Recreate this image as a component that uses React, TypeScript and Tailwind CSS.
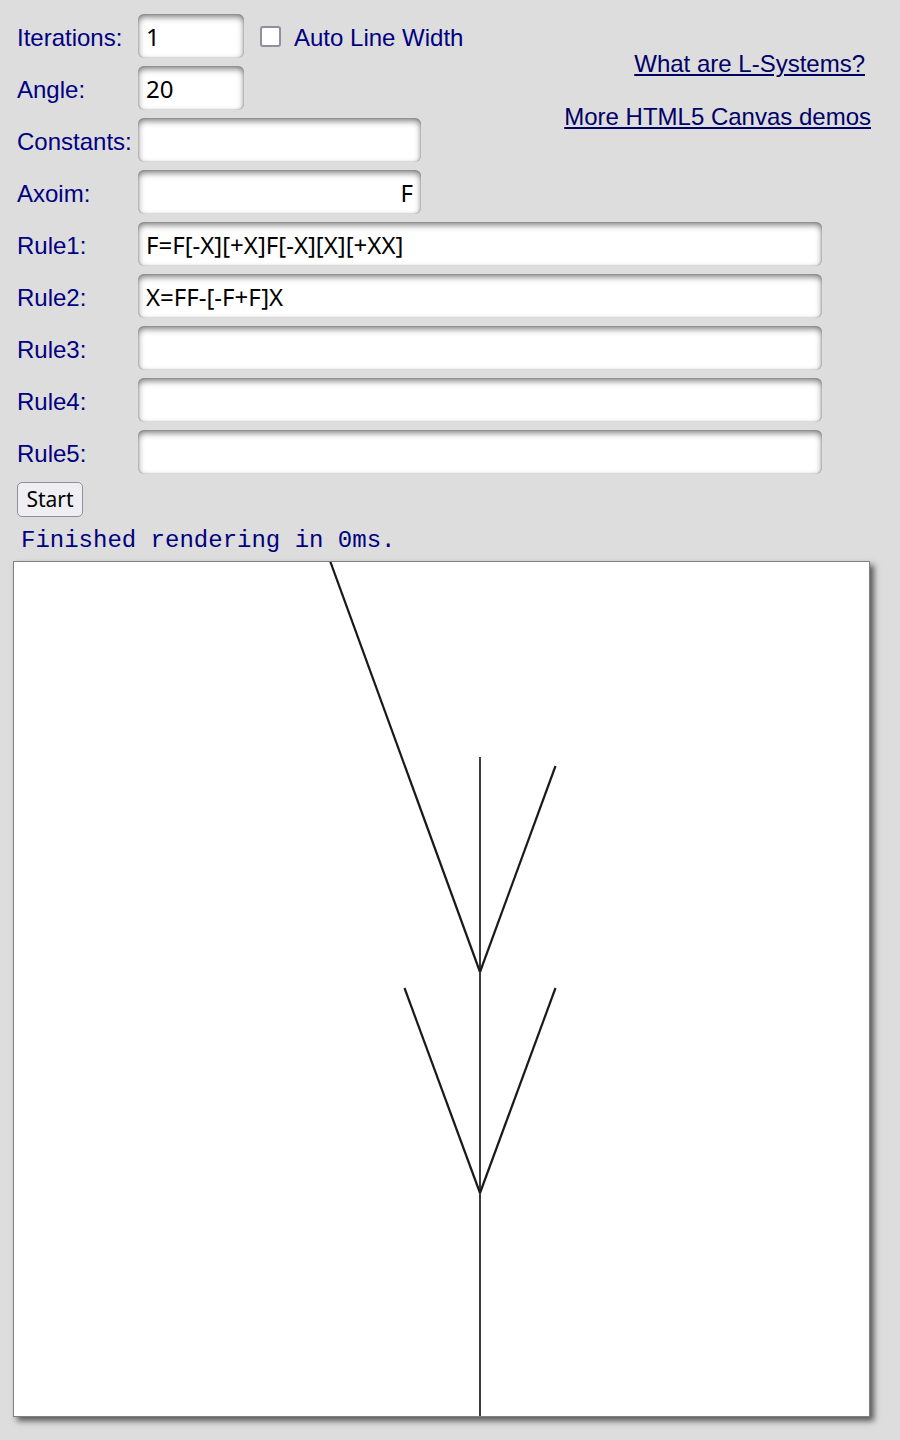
import React from 'react';

const label = 'w-[138px] shrink-0 pl-[17px] pt-[3px] text-[24px] leading-none text-[#000080]';
const field =
  'h-[44px] rounded-[6px] bg-white px-[8px] text-[24px] text-black outline-none shadow-[inset_0_3px_6px_rgba(0,0,0,0.5),inset_0_0_2px_rgba(0,0,0,0.3)]';

function Row({ name, value = '', width, right }: { name: string; value?: string; width: string; right?: boolean }) {
  return (
    <div className="flex items-center h-[44px]">
      <span className={label}>{name}</span>
      <input readOnly value={value} className={`${field} ${width} ${right ? 'text-right' : ''}`} style={{ fontFamily: '"Noto Sans", sans-serif' }} />
    </div>
  );
}

// tree drawn from the L-system, 1 iteration
function Tree() {
  const segs: [number, number, number, number][] = [
    [466, 856, 466, 631],
    [466, 631, 390.5, 426],
    [466, 631, 541.5, 426],
    [466, 631, 466, 410],
    [466, 410, 541.5, 204],
    [466, 410, 466, 195],
    [466, 410, 390.5, 203],
    [390.5, 203, 315, -4],
  ];
  return (
    <svg width="855" height="854" viewBox="0 0 855 854" className="block">
      {segs.map(([x1, y1, x2, y2], i) => (
        <line key={i} x1={x1} y1={y1} x2={x2} y2={y2} stroke="#1a1a1a" strokeWidth={x1 === x2 ? 1.7 : 2.2} />
      ))}
    </svg>
  );
}

export default function App() {
  return (
    <div className="min-h-[1440px] w-[900px] bg-[#dddddd] pt-[14px]" style={{ fontFamily: '"Liberation Sans", Arial, sans-serif' }}>
      <div className="flex">
        <div className="flex flex-col gap-[8px]">
          <div className="flex items-center h-[44px]">
            <span className={label}>Iterations:</span>
            <input readOnly value="1" className={`${field} w-[106px]`} style={{ fontFamily: '"Noto Sans", sans-serif' }} />
            <span className="ml-[16px] w-[21px] h-[21px] rounded-[3px] border-2 border-[#8f8f9d] bg-white" />
            <span className="ml-[13px] pt-[3px] text-[24px] leading-none text-[#000080]">Auto Line Width</span>
          </div>
          <Row name="Angle:" value="20" width="w-[106px]" />
          <Row name="Constants:" width="w-[283px]" />
          <Row name="Axoim:" value="F" width="w-[283px]" right />
        </div>
        <div className="flex-1 flex flex-col items-end pr-[29px] pt-[38px] gap-[29px] text-[24px] leading-none text-[#000066]">
          <a href="#" className="underline mr-[6px]">What are L-Systems?</a>
          <a href="#" className="underline">More HTML5 Canvas demos</a>
        </div>
      </div>

      <div className="mt-[8px] flex flex-col gap-[8px]">
        <Row name="Rule1:" value="F=F[-X][+X]F[-X][X][+XX]" width="w-[684px]" />
        <Row name="Rule2:" value="X=FF-[-F+F]X" width="w-[684px]" />
        <Row name="Rule3:" width="w-[684px]" />
        <Row name="Rule4:" width="w-[684px]" />
        <Row name="Rule5:" width="w-[684px]" />
      </div>

      <button
        className="ml-[17px] mt-[8px] w-[66px] h-[35px] rounded-[5px] border border-[#8f8f9d] bg-[#efeff3] text-[21px] text-black"
        style={{ fontFamily: '"Noto Sans", sans-serif' }}
      >
        Start
      </button>

      <div className="ml-[21px] mt-[10px] h-[28px] text-[24px] leading-[28px] text-[#000080]" style={{ fontFamily: '"Liberation Mono", "Courier New", monospace' }}>
        Finished rendering in 0ms.
      </div>

      <div className="ml-[13px] mt-[6px] w-[857px] h-[856px] border border-[#7f7f7f] bg-white overflow-hidden shadow-[4px_4px_6px_rgba(0,0,0,0.6)]">
        <Tree />
      </div>
    </div>
  );
}
